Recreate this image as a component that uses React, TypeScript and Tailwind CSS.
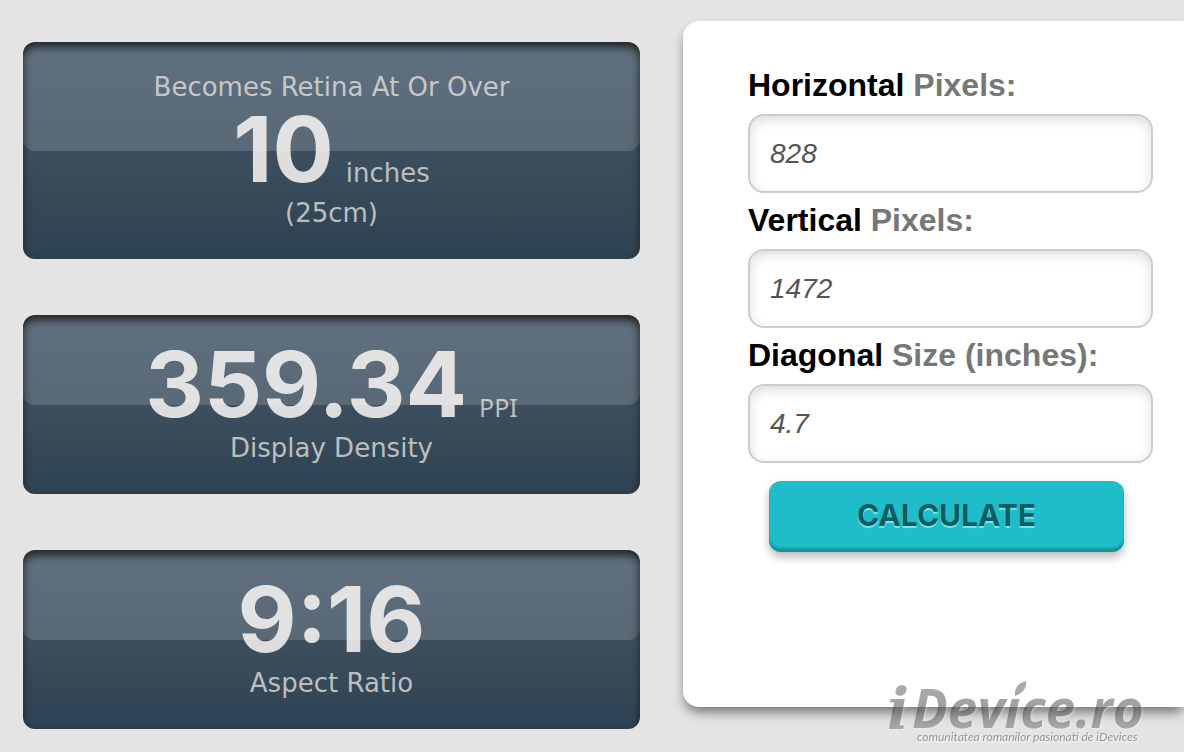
import { useState } from 'react'
import type { ReactNode } from 'react'

const fields = [
  { id: 'horizontal', strong: 'Horizontal', rest: 'Pixels:' },
  { id: 'vertical', strong: 'Vertical', rest: 'Pixels:' },
  { id: 'diagonal', strong: 'Diagonal', rest: 'Size (inches):' },
]

function Panel({ children }: { children: ReactNode }) {
  return (
    <section className="relative overflow-hidden rounded-xl bg-linear-to-b from-[#43576a] via-[#3d4f5f] to-[#2d4252] py-[26px] text-center font-['DejaVu_Sans',Verdana,sans-serif] text-[26px] text-[#bdbfbf]">
      {children}
      {/* Glossy top half */}
      <div className="pointer-events-none absolute inset-x-0 top-0 h-1/2 rounded-b-xl bg-white/15" />
      <div className="pointer-events-none absolute inset-0 rounded-xl shadow-[inset_0_5px_8px_#222222]" />
    </section>
  )
}

function BigValue({ value, children }: { value: string; children?: ReactNode }) {
  return (
    <div className="flex items-baseline justify-center gap-3">
      <span className="font-['Inter',sans-serif] text-[91px] leading-[87px] font-bold text-[#dddddd]">
        {value}
      </span>
      {children}
    </div>
  )
}

function Logo() {
  return (
    <a href="#home" aria-label="iDevice.ro" className="absolute right-[34px] bottom-0">
      <svg
        width="270"
        height="90"
        viewBox="0 -14 270 90"
        className="block drop-shadow-[1px_1px_1px_#ffffff]"
      >
        <defs>
          <linearGradient id="logoFill" gradientUnits="userSpaceOnUse" x1="0" y1="5" x2="0" y2="54">
            <stop offset="0" stopColor="#000000" stopOpacity="0.32" />
            <stop offset="0.6" stopColor="#000000" stopOpacity="0.38" />
            <stop offset="1" stopColor="#000000" stopOpacity="0.28" />
          </linearGradient>
        </defs>
        <g fill="url(#logoFill)">
          <text x="7" y="53" className="font-['DejaVu_Serif',serif] text-[58px] font-bold italic">
            i
          </text>
          <text x="32" y="52" className="font-['Open_Sans',sans-serif] text-[53px] font-bold italic">
            Devıce.ro
          </text>
          <path d="M135 20 C134 12 138 7 146 5 C147 12 143 17 135 20 Z" />
        </g>
        <text x="37" y="65" fill="#959595" className="font-['Lato',sans-serif] text-[12px] italic">
          comunitatea romanilor pasionati de iDevices
        </text>
      </svg>
    </a>
  )
}

export default function App() {
  const [values, setValues] = useState<Record<string, string>>({
    horizontal: '828',
    vertical: '1472',
    diagonal: '4.7',
  })

  return (
    <main className="relative min-h-screen overflow-hidden bg-[#e4e4e4]">
      <div className="grid grid-cols-[617fr_501fr] items-start gap-[43px] pt-[21px] pb-[23px] pl-[23px]">
        {/* Results */}
        <div className="flex flex-col gap-14 pt-[21px]">
          <Panel>
            <p className="leading-[38px]">Becomes Retina At Or Over</p>
            <BigValue value="10">
              <span className="leading-none">inches</span>
            </BigValue>
            <p className="leading-10">(25cm)</p>
          </Panel>
          <Panel>
            <BigValue value="359.34">
              <span className="font-['Noto_Sans',sans-serif] text-[25px] leading-none">PPI</span>
            </BigValue>
            <p className="leading-10">Display Density</p>
          </Panel>
          <Panel>
            <BigValue value="9:16" />
            <p className="leading-10">Aspect Ratio</p>
          </Panel>
        </div>

        {/* Calculator form */}
        <form
          onSubmit={(e) => e.preventDefault()}
          className="flex flex-col rounded-l-2xl bg-white pt-[37px] pr-[31px] pb-[155px] pl-[65px] font-['Liberation_Sans',Arial,sans-serif] shadow-[0_7px_12px_-2px_rgba(0,0,0,0.5)]"
        >
          {fields.map((field) => (
            <div key={field.id} className="flex flex-col">
              <label
                htmlFor={field.id}
                className="pb-0.5 text-[32px] leading-[54px] font-bold text-[#777777]"
              >
                <span className="text-black">{field.strong}</span> {field.rest}
              </label>
              <input
                id={field.id}
                type="text"
                value={values[field.id]}
                onChange={(e) => setValues({ ...values, [field.id]: e.target.value })}
                className="h-[79px] w-full rounded-2xl border-2 border-[#cccccc] bg-white px-5 text-[28px] text-[#555555] italic shadow-[inset_0_4px_12px_rgba(0,0,0,0.14)]"
              />
            </div>
          ))}
          <button
            type="submit"
            className="mt-[18px] mr-[29px] ml-[21px] h-[71px] rounded-xl bg-[#1fbcc9] pb-0.5 font-['Inter',sans-serif] text-[30px] font-bold text-[#0b5c63] shadow-[inset_0_-4px_2px_#17959f,0_5px_10px_rgba(0,0,0,0.28)] [text-shadow:0_2px_1px_#7fe6e6]"
          >
            CALCULATE
          </button>
        </form>
      </div>
      <Logo />
    </main>
  )
}
